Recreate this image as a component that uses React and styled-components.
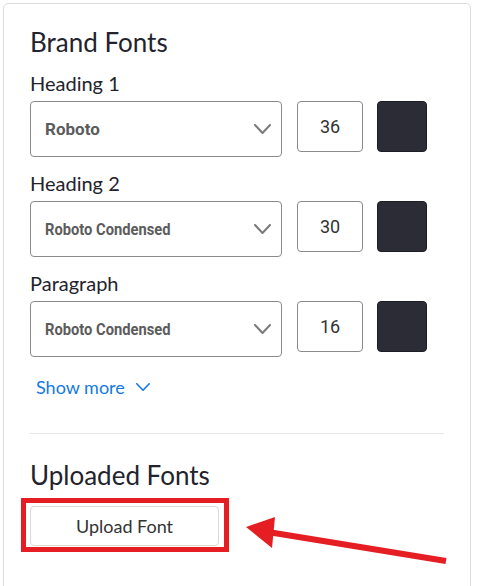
import React from "react";
import styled, { createGlobalStyle } from "styled-components";

const Global = createGlobalStyle`
  html, body { margin: 0; padding: 0; background: #ffffff; }
  body { font-family: "Lato", "Noto Sans", sans-serif; color: #23232d; overflow: hidden; }
  * { box-sizing: border-box; }
`;

const Page = styled.div`
  position: relative;
  width: 478px;
  height: 586px;
  overflow: hidden;
  padding: 3px 0 0 3px;
`;

const Card = styled.div`
  width: 468px;
  height: 640px;
  border: 1px solid #dcdcdc;
  border-radius: 5px;
  padding: 21px 26px 0 26px;
  display: flex;
  flex-direction: column;
`;

const SectionTitle = styled.h2`
  margin: 0;
  font-size: 26px;
  font-weight: 400;
  line-height: 34px;
  color: #23232d;
`;

const FontList = styled.div`
  display: flex;
  flex-direction: column;
  gap: 12px;
  margin-top: 10px;
`;

const FontRow = styled.div`
  display: flex;
  flex-direction: column;
  gap: 4px;
`;

const Label = styled.div`
  font-size: 20px;
  line-height: 28px;
  color: #23232d;
`;

const Controls = styled.div`
  display: flex;
  align-items: flex-start;
  gap: 15px;
`;

const Select = styled.div`
  width: 252px;
  height: 56px;
  border: 1px solid #8a8a8a;
  border-radius: 4px;
  display: flex;
  align-items: center;
  justify-content: space-between;
  padding: 0 10px 0 14px;
`;

const SelectText = styled.span`
  font-family: "Roboto", sans-serif;
  font-weight: 700;
  font-size: 17px;
  color: #5c5c5c;
  display: inline-block;
  transform-origin: left center;
  transform: ${(p) => (p.$condensed ? "scaleX(0.865)" : "none")};
  white-space: nowrap;
`;

const SizeBox = styled.div`
  width: 66px;
  height: 51px;
  border: 1px solid #8a8a8a;
  border-radius: 4px;
  display: flex;
  align-items: center;
  justify-content: center;
  font-family: "Roboto", sans-serif;
  font-size: 18px;
  color: #333;
`;

const Swatch = styled.div`
  width: 50px;
  height: 51px;
  border-radius: 4px;
  background: ${(p) => p.$color};
  border: 1px solid #1d1d24;
  margin-left: -1px;
`;

const ShowMore = styled.button`
  align-self: flex-start;
  margin: 18px 0 0 6px;
  padding: 0;
  border: none;
  background: none;
  font-family: "Lato", "Noto Sans", sans-serif;
  font-size: 18px;
  color: #1479e0;
  display: flex;
  align-items: center;
  gap: 11px;
  line-height: 24px;
`;

const Divider = styled.hr`
  margin: 34px 0 0 0;
  border: none;
  border-top: 1px solid #e6e6e6;
  width: 414px;
`;

const UploadSection = styled.div`
  margin-top: 24px;
  display: flex;
  flex-direction: column;
`;

const UploadButton = styled.button`
  margin-top: 14px;
  width: 189px;
  height: 40px;
  border: 1px solid #d9d9d9;
  border-radius: 4px;
  background: #fff;
  font-family: "Lato", "Noto Sans", sans-serif;
  font-size: 18px;
  color: #333;
  padding: 0;
`;

const Highlight = styled.div`
  position: absolute;
  left: 21px;
  top: 498px;
  width: 208px;
  height: 54px;
  border: 5px solid #e41e22;
  pointer-events: none;
`;

const ArrowSvg = styled.svg`
  position: absolute;
  left: 0;
  top: 0;
  pointer-events: none;
`;

const Chevron = ({ w, h, color, sw }) => (
  <svg width={w} height={h} viewBox={`0 0 ${w} ${h}`} fill="none">
    <polyline
      points={`${sw / 2},${sw / 2} ${w / 2},${h - sw / 2} ${w - sw / 2},${sw / 2}`}
      stroke={color}
      strokeWidth={sw}
      strokeLinecap="round"
      strokeLinejoin="round"
    />
  </svg>
);

const fonts = [
  { label: "Heading 1", font: "Roboto", size: 36, condensed: false },
  { label: "Heading 2", font: "Roboto Condensed", size: 30, condensed: true },
  { label: "Paragraph", font: "Roboto Condensed", size: 16, condensed: true },
];

export default function App() {
  return (
    <Page>
      <Global />
      <Card>
        <SectionTitle>Brand Fonts</SectionTitle>
        <FontList>
          {fonts.map((f) => (
            <FontRow key={f.label}>
              <Label>{f.label}</Label>
              <Controls>
                <Select>
                  <SelectText $condensed={f.condensed}>{f.font}</SelectText>
                  <Chevron w={17} h={10} color="#7a7a7a" sw={2} />
                </Select>
                <SizeBox>{f.size}</SizeBox>
                <Swatch $color="#2c2c36" />
              </Controls>
            </FontRow>
          ))}
        </FontList>
        <ShowMore>
          Show more
          <Chevron w={14} h={8} color="#1479e0" sw={1.6} />
        </ShowMore>
        <Divider />
        <UploadSection>
          <SectionTitle>Uploaded Fonts</SectionTitle>
          <UploadButton>Upload Font</UploadButton>
        </UploadSection>
      </Card>
      <Highlight />
      <ArrowSvg width="478" height="586" viewBox="0 0 478 586">
        <line x1="446" y1="561" x2="268" y2="532" stroke="#e41e22" strokeWidth="6" />
        <polygon points="246,527 275,517 272,548" fill="#e41e22" />
      </ArrowSvg>
    </Page>
  );
}
